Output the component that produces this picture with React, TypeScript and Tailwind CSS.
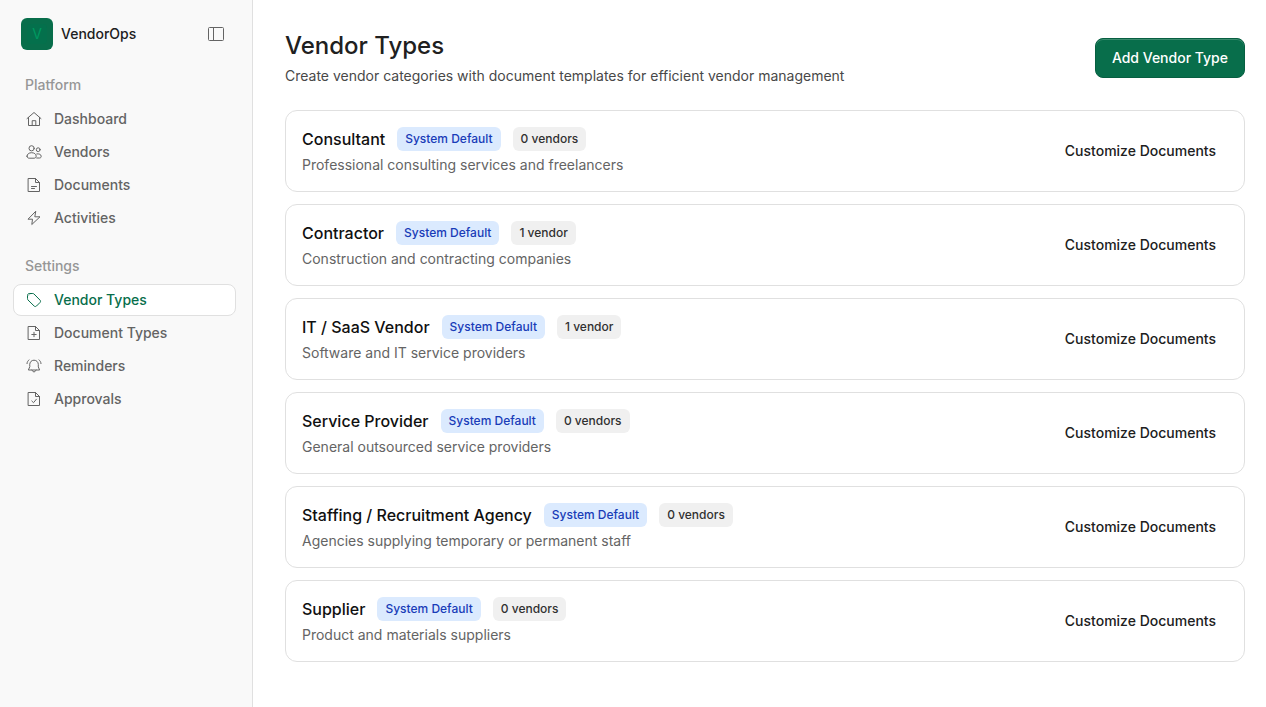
import type { ReactNode } from 'react'

const filePath = 'M2.5 1.5H9.500l4 4v9h-11zM9.500 1.500v4h4'

const icons: Record<string, ReactNode> = {
  home: (
    <>
      <path d="M1 7.600 8 1.500l7 6.100" />
      <path d="M2.500 6.500v8h11v-8" />
      <path d="M6.200 14.300V9.700h3.600v4.600" />
    </>
  ),
  users: (
    <>
      <circle cx="5.600" cy="4.300" r="2.600" />
      <circle cx="12.200" cy="5.700" r="1.900" />
      <path d="M1 12.200c0-2.100 2-3.500 4.600-3.500s4.600 1.400 4.600 3.500c0 1.300-1 2-2.200 2H3.200c-1.200 0-2.200-.7-2.200-2z" />
      <path d="M10.800 9.900c2.300-.4 4.400.6 4.400 2.400 0 1-.6 1.700-1.500 1.700h-3" />
    </>
  ),
  file: (
    <>
      <path d={filePath} />
      <path d="M5.500 9.500h5M5.500 11.500h3" />
    </>
  ),
  bolt: <path d="M9.500 1.500 2 9.200h4.500L5.800 14.500 14 6.800H9.200z" />,
  tag: (
    <>
      <path d="M1.500 3.200c0-.9.800-1.700 1.700-1.700h3.600c.5 0 .9.200 1.200.5l6 6.100c.7.700.7 1.700 0 2.400l-3.500 3.500c-.7.700-1.700.7-2.400 0L2 8c-.3-.3-.5-.8-.5-1.200z" />
      <path d="M2.600 3.600 4 2.200" strokeOpacity="0.4" />
    </>
  ),
  filePlus: (
    <>
      <path d={filePath} />
      <path d="M8 7.300v4.400M5.800 9.500h4.400" />
    </>
  ),
  bell: (
    <>
      <path d="M3.700 6.400C3.700 4 5.600 2.200 8 2.200S12.300 4 12.300 6.400v2.500l1.300 3.100H2.400l1.300-3.100z" />
      <path d="M5.800 12.200 8 14.200l2.200-2" />
      <path d="M1 5.600c.1-1.500.8-2.800 2-3.700M15 5.600c-.1-1.500-.8-2.800-2-3.700" />
    </>
  ),
  fileCheck: (
    <>
      <path d={filePath} />
      <path d="m5.800 10 1.700 1.700 2.900-3.500" />
    </>
  ),
}

function Icon({ name }: { name: string }) {
  return (
    <svg viewBox="0 0 16 16" className="size-4 shrink-0" fill="none" stroke="currentColor" strokeWidth="1" strokeLinecap="round" strokeLinejoin="round" aria-hidden="true">
      {icons[name]}
    </svg>
  )
}

const groups = [
  {
    label: 'Platform',
    items: [
      { label: 'Dashboard', icon: 'home' },
      { label: 'Vendors', icon: 'users' },
      { label: 'Documents', icon: 'file' },
      { label: 'Activities', icon: 'bolt' },
    ],
  },
  {
    label: 'Settings',
    items: [
      { label: 'Vendor Types', icon: 'tag', active: true },
      { label: 'Document Types', icon: 'filePlus' },
      { label: 'Reminders', icon: 'bell' },
      { label: 'Approvals', icon: 'fileCheck' },
    ],
  },
]

const vendorTypes = [
  { name: 'Consultant', description: 'Professional consulting services and freelancers', vendors: 0 },
  { name: 'Contractor', description: 'Construction and contracting companies', vendors: 1 },
  { name: 'IT / SaaS Vendor', description: 'Software and IT service providers', vendors: 1 },
  { name: 'Service Provider', description: 'General outsourced service providers', vendors: 0 },
  { name: 'Staffing / Recruitment Agency', description: 'Agencies supplying temporary or permanent staff', vendors: 0 },
  { name: 'Supplier', description: 'Product and materials suppliers', vendors: 0 },
]

function Sidebar() {
  return (
    <aside className="w-[253px] shrink-0 border-r border-[#e0e0e0] bg-[#f9f9f9] pt-[18px] pr-4 pl-[13px]">
      <div className="flex h-8 items-center pl-2">
        <div className="flex size-8 items-center justify-center rounded-md bg-[#086e4b]">
          <span className="flex size-5 items-center justify-center rounded bg-[#04704c] text-sm text-[#009860]">V</span>
        </div>
        <span className="ml-2 text-sm font-medium text-[#202020]">VendorOps</span>
        <button type="button" aria-label="Toggle sidebar" className="mr-[11px] ml-auto text-[#646464]">
          <svg viewBox="0 0 18 16" className="h-4 w-[18px]" fill="none" stroke="currentColor" aria-hidden="true">
            <rect x="1.500" y="1.500" width="15" height="13" rx="1" />
            <path d="M6.500 1.500v13" />
          </svg>
        </button>
      </div>

      <nav className="mt-[19px] space-y-4">
        {groups.map((group) => (
          <div key={group.label}>
            <p className="flex h-8 items-center px-3 text-sm font-medium text-[#969696]">{group.label}</p>
            <ul className="mt-[2px] space-y-px">
              {group.items.map((item) => (
                <li key={item.label}>
                  <a
                    href="#"
                    aria-current={'active' in item ? 'page' : undefined}
                    className={`flex h-8 items-center gap-3 rounded-lg border px-3 text-sm font-medium ${
                      'active' in item ? 'border-[#e0e0e0] bg-white text-[#086e4b]' : 'border-transparent text-[#646464]'
                    }`}
                  >
                    <Icon name={item.icon} />
                    {item.label}
                  </a>
                </li>
              ))}
            </ul>
          </div>
        ))}
      </nav>
    </aside>
  )
}

export default function App() {
  return (
    <div className="flex min-h-screen bg-white font-['Inter',sans-serif]">
      <Sidebar />

      <main className="min-w-0 flex-1 pt-[30px] pr-[21px] pb-8 pl-8">
        <div className="flex items-center justify-between">
          <div className="space-y-1">
            <h1 className="text-2xl leading-8 font-medium text-[#202020]">Vendor Types</h1>
            <p className="text-sm text-[#484848]">Create vendor categories with document templates for efficient vendor management</p>
          </div>
          <button type="button" className="h-10 rounded-lg border border-[#075f41] bg-[#086e4b] px-4 text-sm font-medium text-white shadow-[inset_0_1px_0_#3b8c6f]">
            Add Vendor Type
          </button>
        </div>

        <div className="mt-6 space-y-3">
          {vendorTypes.map((type) => (
            <div key={type.name} className="flex items-center justify-between rounded-xl border border-[#e0e0e0] p-4">
              <div className="space-y-1">
                <div className="flex h-6 items-center gap-3">
                  <h2 className="text-base font-medium text-[#101010]">{type.name}</h2>
                  <span className="flex h-6 items-center rounded-md bg-[#dbeafe] px-2 text-xs font-medium text-[#193cb8]">System Default</span>
                  <span className="flex h-6 items-center rounded-md bg-[#f0f0f0] px-2 text-xs font-medium text-[#303030]">
                    {type.vendors} {type.vendors === 1 ? 'vendor' : 'vendors'}
                  </span>
                </div>
                <p className="text-sm text-[#646464]">{type.description}</p>
              </div>
              <button type="button" className="h-8 px-3 text-sm font-medium text-[#202020]">
                Customize Documents
              </button>
            </div>
          ))}
        </div>
      </main>
    </div>
  )
}
